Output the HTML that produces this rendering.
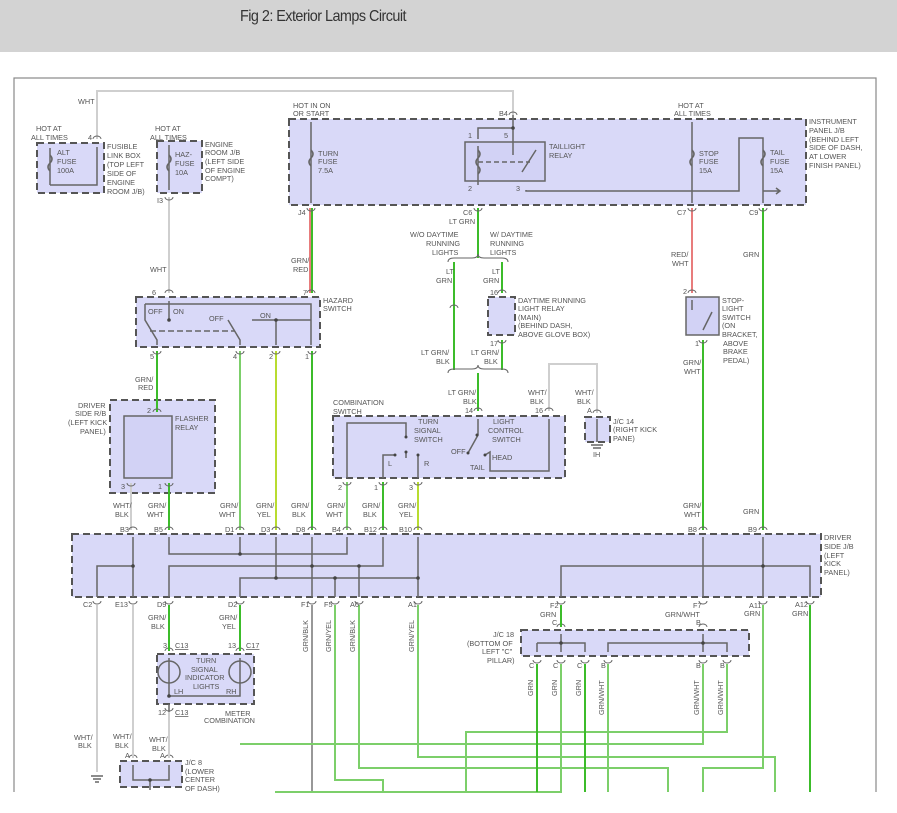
<!DOCTYPE html>
<html><head><meta charset="utf-8"><style>
html,body{margin:0;padding:0;background:#fff;width:897px;height:813px;overflow:hidden}
.hdr{position:absolute;left:0;top:0;width:897px;height:52px;background:#d3d3d3}
.hdr span{position:absolute;left:240px;top:8px;font:16px "Liberation Sans",sans-serif;color:#333;letter-spacing:-0.6px;transform:scaleX(0.9);transform-origin:left}
svg{position:absolute;left:0;top:0}
text{font-family:"Liberation Sans",sans-serif;font-size:7.3px;fill:#555}
.b{fill:#d9d9f8;stroke:#555;stroke-width:2;stroke-dasharray:7 4}
.s{fill:#d2d2f5;stroke:#666;stroke-width:1.5}
.i{fill:none;stroke:#666;stroke-width:1.5}
.g{fill:none;stroke:#3cbc2a;stroke-width:2}
.lg{fill:none;stroke:#7ccf6a;stroke-width:2}
.y{fill:none;stroke:#b8dc30;stroke-width:2}
.r{fill:none;stroke:#e05050;stroke-width:1.5}
.w{fill:none;stroke:#cfcfcf;stroke-width:2}
.k{fill:none;stroke:#777;stroke-width:1.5}
.d{fill:#444}
.c{fill:none;stroke:#666;stroke-width:1}
</style></head><body>
<div class="hdr"><span>Fig 2: Exterior Lamps Circuit</span></div>
<svg width="897" height="813" viewBox="0 0 897 813">
<rect x="14" y="78" width="862" height="760" fill="none" stroke="#888" stroke-width="1.2"/>
<rect x="0" y="792" width="897" height="21" fill="#fff"/>

<rect class="b" x="37" y="143" width="67" height="50"/>
<rect class="b" x="157" y="141" width="45" height="52"/>
<rect class="b" x="289" y="119" width="517" height="86"/>
<rect class="b" x="136" y="297" width="184" height="50"/>
<rect class="b" x="110" y="400" width="105" height="93"/>
<rect class="s" x="124" y="416" width="48" height="62"/>
<rect class="b" x="333" y="416" width="232" height="62"/>
<rect class="b" x="585" y="417" width="25" height="25"/>
<rect class="b" x="488" y="297" width="27" height="38"/>
<rect class="s" x="686" y="297" width="33" height="38"/>
<rect class="s" x="465" y="142" width="80" height="39"/>
<rect class="b" x="72" y="534" width="749" height="63"/>
<rect class="b" x="157" y="654" width="97" height="50"/>
<rect class="b" x="120" y="761" width="62" height="26"/>
<rect class="b" x="521" y="630" width="228" height="26"/>

<path class="w" d="M97 139V91H513V115"/>
<path class="w" d="M169 197V293"/>
<path class="r" d="M310 208V293"/><path class="g" d="M312 208V293" stroke-width="1.2"/>
<path class="g" d="M478 208V258M454 262V370M502 262V293M502 340V370M478 373V411"/>
<path class="c" d="M448 262q0-4 6-4h18q6 0 6-4q0 4 6 4h18q6 0 6 4M448 373q0-4 6-4h18q6 0 6-4q0 4 6 4h18q6 0 6 4"/>
<path class="c" d="M450 308a4 3 0 0 1 8 0"/>
<path class="r" d="M692 208V293"/>
<path class="g" d="M763 208V530M703 340V530"/>
<path class="w" d="M549 411V364H597V413"/>
<path class="g" d="M157 351V412"/>
<path class="lg" d="M240 351V530"/>
<path class="y" d="M276 351V530"/>
<path class="g" d="M312 351V530"/>
<path class="w" d="M131 483V530"/>
<path class="g" d="M169 483V530"/>
<path class="lg" d="M347 482V530"/>
<path class="g" d="M383 482V530"/>
<path class="y" d="M418 482V530"/>

<path class="i" d="M50 185V148M50 185H97V147"/>
<path class="i" d="M50 155q4 4 0 8q-4 4 0 8"/>
<path class="i" d="M169 145V190"/>
<path class="i" d="M169 155q4 4 0 8q-4 4 0 8"/>
<path class="i" d="M311 122V203M692 122V203"/>
<path class="i" d="M311 150q4 4 0 8q-4 4 0 8M692 150q4 4 0 8q-4 4 0 8M763 150q4 4 0 8q-4 4 0 8"/>
<path class="i" d="M513 115V128M478 139V128H513M513 128V155M478 146V185M526 190V191H739V138H763V203M763 191H780M776 188l4 3-4 3"/>
<path class="i" d="M478 162H530" stroke-dasharray="5 3"/>
<path class="i" d="M522 172L536 150"/>
<path class="i" d="M478 150q4 4 0 8q-4 4 0 8q4 4 0 8"/>
<path class="i" d="M145 304H311V345M145 304V320L157 340V345M169 301V320M228 320L240 340V345M252 320H311M276 320V345"/>
<path class="i" d="M150 331H235" stroke-dasharray="6 3"/>
<path class="i" d="M347 478V423H406V437M406 452V458M383 478V455H395M418 478V455M478 419V435L468 453M485 455L490 452V471H549V419"/>
<path class="i" d="M597 419V442M591 445H603M593 448H601"/>
<path class="i" d="M692 300V310M703 330L712 312"/>
<path class="i" d="M133 537V597M97 597V566H133M169 537V554H347V537M240 537V554M169 597V566H383V537M240 597V578H418M276 537V578M312 537V597M418 537V597M335 578V597M359 566V597M561 597V566H810V597M703 537V597M763 537V597"/>
<path class="i" d="M169 658V696H240V658M169 704V758"/>
<circle cx="169" cy="672" r="11" class="i"/><circle cx="240" cy="672" r="11" class="i"/>
<path class="i" d="M133 765V780H169V765M150 780V790"/>
<path class="i" d="M561 634V643M537 643H585V652M537 643V652M561 643V652M608 652V643H727V652M703 634V652"/>
<g class="d">
<circle cx="513" cy="128" r="1.8"/><circle cx="169" cy="320" r="1.8"/><circle cx="276" cy="320" r="1.8"/>
<circle cx="240" cy="554" r="1.8"/><circle cx="133" cy="566" r="1.8"/><circle cx="312" cy="566" r="1.8"/><circle cx="359" cy="566" r="1.8"/>
<circle cx="276" cy="578" r="1.8"/><circle cx="335" cy="578" r="1.8"/><circle cx="418" cy="578" r="1.8"/><circle cx="763" cy="566" r="1.8"/>
<circle cx="561" cy="643" r="1.8"/><circle cx="703" cy="643" r="1.8"/><circle cx="169" cy="696" r="1.8"/><circle cx="150" cy="780" r="1.8"/>
<circle cx="406" cy="437" r="1.5"/><circle cx="406" cy="452" r="1.5"/><circle cx="395" cy="455" r="1.5"/><circle cx="418" cy="455" r="1.5"/>
<circle cx="477" cy="435" r="1.5"/><circle cx="468" cy="453" r="1.5"/><circle cx="485" cy="455" r="1.5"/>
</g>
<g class="c">
<path d="M93 139a4 3 0 0 1 8 0M165 197a4 3 0 0 0 8 0M307 208a4 3 0 0 0 8 0M509 115a4 3 0 0 1 8 0M474 208a4 3 0 0 0 8 0M688 208a4 3 0 0 0 8 0M759 208a4 3 0 0 0 8 0"/>
<path d="M165 293a4 3 0 0 1 8 0M307 293a4 3 0 0 1 8 0M153 351a4 3 0 0 0 8 0M236 351a4 3 0 0 0 8 0M272 351a4 3 0 0 0 8 0M308 351a4 3 0 0 0 8 0"/>
<path d="M153 412a4 3 0 0 1 8 0M127 483a4 3 0 0 0 8 0M165 483a4 3 0 0 0 8 0M474 411a4 3 0 0 1 8 0M545 411a4 3 0 0 1 8 0M593 413a4 3 0 0 1 8 0M498 293a4 3 0 0 1 8 0M498 340a4 3 0 0 0 8 0M688 293a4 3 0 0 1 8 0M699 340a4 3 0 0 0 8 0"/>
<path d="M343 482a4 3 0 0 0 8 0M379 482a4 3 0 0 0 8 0M414 482a4 3 0 0 0 8 0"/>
<path d="M129 530a4 3 0 0 1 8 0M165 530a4 3 0 0 1 8 0M236 530a4 3 0 0 1 8 0M272 530a4 3 0 0 1 8 0M308 530a4 3 0 0 1 8 0M343 530a4 3 0 0 1 8 0M379 530a4 3 0 0 1 8 0M414 530a4 3 0 0 1 8 0M699 530a4 3 0 0 1 8 0M759 530a4 3 0 0 1 8 0"/>
<path d="M93 601a4 3 0 0 0 8 0M129 601a4 3 0 0 0 8 0M165 601a4 3 0 0 0 8 0M236 601a4 3 0 0 0 8 0M308 601a4 3 0 0 0 8 0M331 601a4 3 0 0 0 8 0M355 601a4 3 0 0 0 8 0M414 601a4 3 0 0 0 8 0M557 601a4 3 0 0 0 8 0M699 601a4 3 0 0 0 8 0M759 601a4 3 0 0 0 8 0M806 601a4 3 0 0 0 8 0"/>
<path d="M165 651a4 3 0 0 1 8 0M236 651a4 3 0 0 1 8 0M165 708a4 3 0 0 0 8 0M129 758a4 3 0 0 1 8 0M165 758a4 3 0 0 1 8 0M557 627a4 3 0 0 1 8 0M699 627a4 3 0 0 1 8 0"/>
<path d="M533 660a4 3 0 0 0 8 0M557 660a4 3 0 0 0 8 0M581 660a4 3 0 0 0 8 0M604 660a4 3 0 0 0 8 0M699 660a4 3 0 0 0 8 0M723 660a4 3 0 0 0 8 0"/>
</g>
<path class="w" d="M97 605V772M133 605V758M169 712V758"/>
<path class="i" d="M91 776H103M93 779H101M95 782H99"/>
<path class="g" d="M169 605V651M240 605V651"/>
<path class="k" d="M312 605V792"/>
<path class="lg" d="M335 605V780H383V792M359 605V768H668V792M418 605V757H775V792M240 744H703V664M466 792V732H727V664M703 792V768H763V605M537 664V792M561 605V627M561 664V792H275M585 664V792M608 664V792M810 605V792"/>
<path class="g" d="M561 605V627M537 664V792M585 664V792M810 605V792"/>

<text x="78" y="104">WHT</text>
<text x="36" y="131">HOT AT</text><text x="31" y="140">ALL TIMES</text><text x="88" y="140">4</text>
<text x="57" y="155">ALT</text><text x="57" y="164">FUSE</text><text x="57" y="173">100A</text>
<text x="107" y="149">FUSIBLE</text><text x="107" y="158">LINK BOX</text><text x="107" y="167">(TOP LEFT</text><text x="107" y="176">SIDE OF</text><text x="107" y="185">ENGINE</text><text x="107" y="194">ROOM J/B)</text>
<text x="155" y="131">HOT AT</text><text x="150" y="140">ALL TIMES</text>
<text x="175" y="157">HAZ-</text><text x="175" y="166">FUSE</text><text x="175" y="175">10A</text>
<text x="205" y="147">ENGINE</text><text x="205" y="155">ROOM J/B</text><text x="205" y="164">(LEFT SIDE</text><text x="205" y="173">OF ENGINE</text><text x="205" y="181">COMPT)</text>
<text x="157" y="203">I3</text><text x="150" y="272">WHT</text>
<text x="293" y="108">HOT IN ON</text><text x="293" y="116">OR START</text>
<text x="318" y="156">TURN</text><text x="318" y="164">FUSE</text><text x="318" y="173">7.5A</text>
<text x="298" y="215">J4</text><text x="291" y="263">GRN/</text><text x="293" y="272">RED</text>
<text x="499" y="116">B4</text><text x="468" y="138">1</text><text x="504" y="138">5</text>
<text x="549" y="149">TAILLIGHT</text><text x="549" y="158">RELAY</text>
<text x="468" y="191">2</text><text x="516" y="191">3</text>
<text x="678" y="108">HOT AT</text><text x="674" y="116">ALL TIMES</text>
<text x="699" y="156">STOP</text><text x="699" y="164">FUSE</text><text x="699" y="173">15A</text>
<text x="770" y="155">TAIL</text><text x="770" y="164">FUSE</text><text x="770" y="173">15A</text>
<text x="809" y="124">INSTRUMENT</text><text x="809" y="133">PANEL J/B</text><text x="809" y="142">(BEHIND LEFT</text><text x="809" y="150">SIDE OF DASH,</text><text x="809" y="159">AT LOWER</text><text x="809" y="168">FINISH PANEL)</text>
<text x="463" y="215">C6</text><text x="449" y="224">LT GRN</text><text x="677" y="215">C7</text><text x="749" y="215">C9</text>
<text x="410" y="237">W/O DAYTIME</text><text x="426" y="246">RUNNING</text><text x="432" y="255">LIGHTS</text>
<text x="490" y="237">W/ DAYTIME</text><text x="490" y="246">RUNNING</text><text x="490" y="255">LIGHTS</text>
<text x="446" y="274">LT</text><text x="436" y="283">GRN</text><text x="492" y="274">LT</text><text x="483" y="283">GRN</text>
<text x="490" y="295">16</text>
<text x="518" y="303">DAYTIME RUNNING</text><text x="518" y="311">LIGHT RELAY</text><text x="518" y="320">(MAIN)</text><text x="518" y="328">(BEHIND DASH,</text><text x="518" y="337">ABOVE GLOVE BOX)</text>
<text x="490" y="346">17</text><text x="421" y="355">LT GRN/</text><text x="436" y="364">BLK</text><text x="471" y="355">LT GRN/</text><text x="484" y="364">BLK</text>
<text x="671" y="257">RED/</text><text x="672" y="266">WHT</text><text x="743" y="257">GRN</text>
<text x="683" y="294">2</text><text x="695" y="346">1</text>
<text x="722" y="303">STOP-</text><text x="722" y="311">LIGHT</text><text x="722" y="320">SWITCH</text><text x="722" y="328">(ON</text><text x="722" y="337">BRACKET,</text><text x="723" y="346">ABOVE</text><text x="723" y="354">BRAKE</text><text x="723" y="363">PEDAL)</text>
<text x="683" y="365">GRN/</text><text x="684" y="374">WHT</text>
<text x="152" y="295">6</text><text x="303" y="295">7</text>
<text x="323" y="303">HAZARD</text><text x="323" y="311">SWITCH</text>
<text x="148" y="314">OFF</text><text x="173" y="314">ON</text><text x="209" y="321">OFF</text><text x="260" y="318">ON</text>
<text x="150" y="359">5</text><text x="233" y="359">4</text><text x="269" y="359">2</text><text x="305" y="359">1</text>
<text x="135" y="382">GRN/</text><text x="138" y="390">RED</text>
<text x="78" y="408">DRIVER</text><text x="75" y="416">SIDE R/B</text><text x="68" y="425">(LEFT KICK</text><text x="80" y="434">PANEL)</text>
<text x="147" y="413">2</text><text x="175" y="421">FLASHER</text><text x="175" y="430">RELAY</text>
<text x="121" y="489">3</text><text x="158" y="489">1</text>
<text x="333" y="405">COMBINATION</text><text x="333" y="414">SWITCH</text>
<text x="448" y="395">LT GRN/</text><text x="463" y="404">BLK</text><text x="465" y="413">14</text>
<text x="528" y="395">WHT/</text><text x="530" y="404">BLK</text><text x="535" y="413">16</text>
<text x="575" y="395">WHT/</text><text x="577" y="404">BLK</text><text x="587" y="413">A</text>
<text x="613" y="424">J/C 14</text><text x="613" y="432">(RIGHT KICK</text><text x="613" y="441">PANE)</text><text x="593" y="457">IH</text>
<text x="418" y="424">TURN</text><text x="414" y="433">SIGNAL</text><text x="414" y="442">SWITCH</text>
<text x="493" y="424">LIGHT</text><text x="488" y="433">CONTROL</text><text x="492" y="442">SWITCH</text>
<text x="451" y="454">OFF</text><text x="470" y="470">TAIL</text><text x="492" y="460">HEAD</text>
<text x="388" y="466">L</text><text x="424" y="466">R</text>
<text x="338" y="490">2</text><text x="374" y="490">1</text><text x="409" y="490">3</text>
<g>
<text x="113" y="508">WHT/</text><text x="115" y="517">BLK</text><text x="148" y="508">GRN/</text><text x="147" y="517">WHT</text>
<text x="220" y="508">GRN/</text><text x="219" y="517">WHT</text><text x="256" y="508">GRN/</text><text x="257" y="517">YEL</text>
<text x="291" y="508">GRN/</text><text x="292" y="517">BLK</text><text x="327" y="508">GRN/</text><text x="326" y="517">WHT</text>
<text x="362" y="508">GRN/</text><text x="363" y="517">BLK</text><text x="398" y="508">GRN/</text><text x="399" y="517">YEL</text>
<text x="683" y="508">GRN/</text><text x="684" y="517">WHT</text><text x="743" y="514">GRN</text>
<text x="120" y="532">B3</text><text x="154" y="532">B5</text><text x="225" y="532">D1</text><text x="261" y="532">D3</text><text x="296" y="532">D8</text><text x="332" y="532">B4</text><text x="364" y="532">B12</text><text x="399" y="532">B10</text><text x="688" y="532">B8</text><text x="748" y="532">B9</text>
</g>
<text x="824" y="540">DRIVER</text><text x="824" y="549">SIDE J/B</text><text x="824" y="558">(LEFT</text><text x="824" y="566">KICK</text><text x="824" y="575">PANEL)</text>
<text x="83" y="607">C2</text><text x="115" y="607">E13</text><text x="157" y="607">D9</text><text x="228" y="607">D2</text><text x="301" y="607">F1</text><text x="324" y="607">F5</text><text x="350" y="607">A6</text><text x="408" y="607">A1</text>
<text x="550" y="608">F2</text><text x="540" y="617">GRN</text><text x="552" y="625">C</text>
<text x="693" y="608">F7</text><text x="665" y="617">GRN/WHT</text><text x="696" y="625">B</text>
<text x="749" y="608">A11</text><text x="744" y="616">GRN</text><text x="795" y="607">A12</text><text x="792" y="616">GRN</text>
<text x="148" y="620">GRN/</text><text x="151" y="629">BLK</text><text x="219" y="620">GRN/</text><text x="222" y="629">YEL</text>
<g transform="rotate(-90)">
<text x="-652" y="308">GRN/BLK</text><text x="-652" y="331">GRN/YEL</text><text x="-652" y="355">GRN/BLK</text><text x="-652" y="414">GRN/YEL</text>
<text x="-696" y="533">GRN</text><text x="-696" y="557">GRN</text><text x="-696" y="581">GRN</text><text x="-715" y="604">GRN/WHT</text><text x="-715" y="699">GRN/WHT</text><text x="-715" y="723">GRN/WHT</text>
</g>
<text x="493" y="637">J/C 18</text><text x="467" y="646">(BOTTOM OF</text><text x="482" y="654">LEFT "C"</text><text x="487" y="663">PILLAR)</text>
<text x="529" y="668">C</text><text x="553" y="668">C</text><text x="577" y="668">C</text><text x="601" y="668">B</text><text x="696" y="668">B</text><text x="720" y="668">B</text>
<text x="163" y="648">3</text><text x="175" y="648" text-decoration="underline">C13</text>
<text x="228" y="648">13</text><text x="246" y="648" text-decoration="underline">C17</text>
<text x="196" y="663">TURN</text><text x="191" y="672">SIGNAL</text><text x="185" y="680">INDICATOR</text><text x="193" y="689">LIGHTS</text>
<text x="174" y="694">LH</text><text x="226" y="694">RH</text>
<text x="158" y="715">12</text><text x="175" y="715" text-decoration="underline">C13</text>
<text x="225" y="716">METER</text><text x="204" y="723">COMBINATION</text>
<text x="74" y="740">WHT/</text><text x="78" y="748">BLK</text><text x="113" y="739">WHT/</text><text x="115" y="748">BLK</text>
<text x="149" y="742">WHT/</text><text x="152" y="751">BLK</text>
<text x="125" y="758">A</text><text x="160" y="758">A</text>
<text x="185" y="765">J/C 8</text><text x="185" y="774">(LOWER</text><text x="185" y="782">CENTER</text><text x="185" y="791">OF DASH)</text>
</svg>
</body></html>
